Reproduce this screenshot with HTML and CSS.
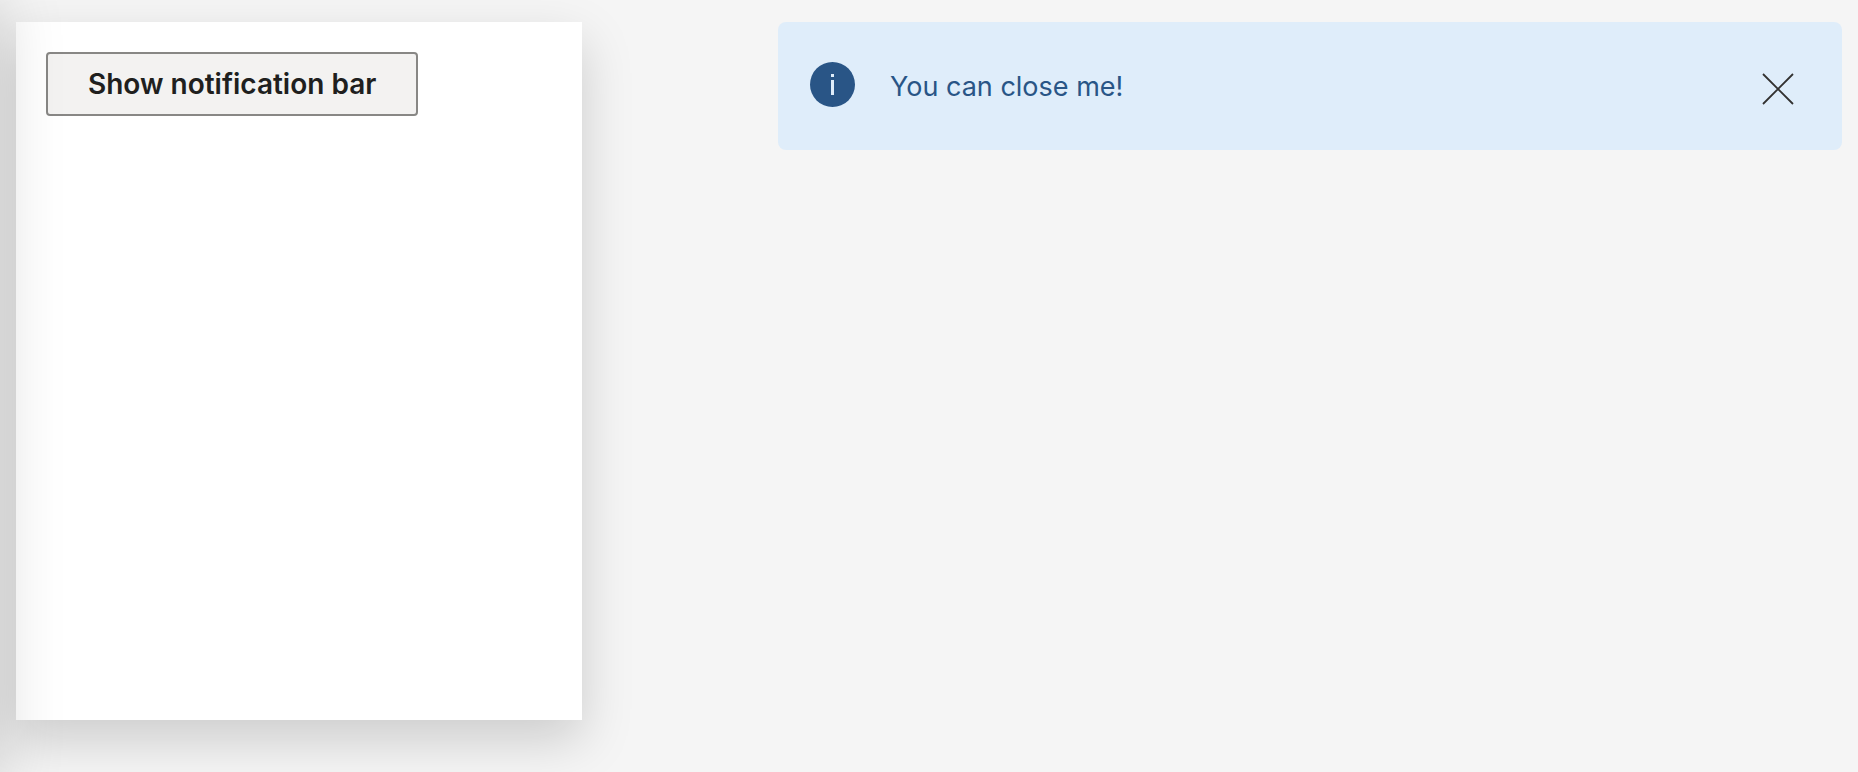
FILE: index.html
```html
<!DOCTYPE html>
<html lang="en">
<head>
<meta charset="utf-8">
<meta name="viewport" content="width=device-width, initial-scale=1">
<title>Notification bar</title>
<link rel="stylesheet" href="styles.css">
</head>
<body>
<div class="layout">
  <section class="panel">
    <button class="button" type="button">Show notification bar</button>
  </section>
  <main class="content">
    <div class="notice" role="status">
      <svg class="notice-icon" viewBox="0 0 45 45" aria-hidden="true">
        <circle cx="22.5" cy="22.5" r="22.5" fill="#295586"/>
        <path d="M21 12h3v3h-3zM21 18h3v15h-3z" fill="#dfedfa"/>
      </svg>
      <p class="notice-text">You can close me!</p>
      <button class="close" type="button" aria-label="Close">
        <svg class="close-icon" viewBox="0 0 32 32" aria-hidden="true">
          <path d="M1 1l30 30M31 1L1 31" fill="none" stroke="#323130" stroke-width="1.8"/>
        </svg>
      </button>
    </div>
  </main>
</div>
</body>
</html>
```
FILE: styles.css
```css
* {
  box-sizing: border-box;
}

body {
  margin: 0;
  background: #f5f5f5;
  font-family: Inter, "Liberation Sans", sans-serif;
  font-size: 28px;
  line-height: 40px;
}

.layout {
  position: relative;
  display: grid;
  grid-template-columns: minmax(420px, 566fr) 1064fr;
  column-gap: 196px;
  min-height: 100vh;
  padding: 22px 16px 52px;
  overflow: hidden;
}

.layout::before {
  content: "";
  position: absolute;
  z-index: 1;
  top: -20px;
  bottom: 0;
  right: 100%;
  width: 200px;
  box-shadow: 0 16px 60px rgba(0, 0, 0, 0.17);
  pointer-events: none;
}

.panel {
  padding: 30px;
  background: #fff;
  box-shadow: 0 20px 48px rgba(0, 0, 0, 0.17);
}

.button {
  display: block;
  height: 64px;
  padding: 0 40px;
  border: 2px solid #888785;
  border-radius: 4px;
  background: #f3f2f1;
  color: #201f1e;
  font: inherit;
  font-weight: 600;
}

.notice {
  display: flex;
  align-items: flex-start;
  min-height: 128px;
  padding: 40px 48px 40px 32px;
  border-radius: 8px;
  background: #dfedfa;
  color: #295586;
}

.notice-icon {
  flex: none;
  width: 45px;
  height: 45px;
}

.notice-text {
  flex: 1;
  margin: 5px 0 0 35px;
  font-size: 27px;
}

.close {
  margin: 11px 0 0;
  padding: 0;
  border: 0;
  background: none;
}

.close-icon {
  display: block;
  width: 32px;
  height: 32px;
}
```
